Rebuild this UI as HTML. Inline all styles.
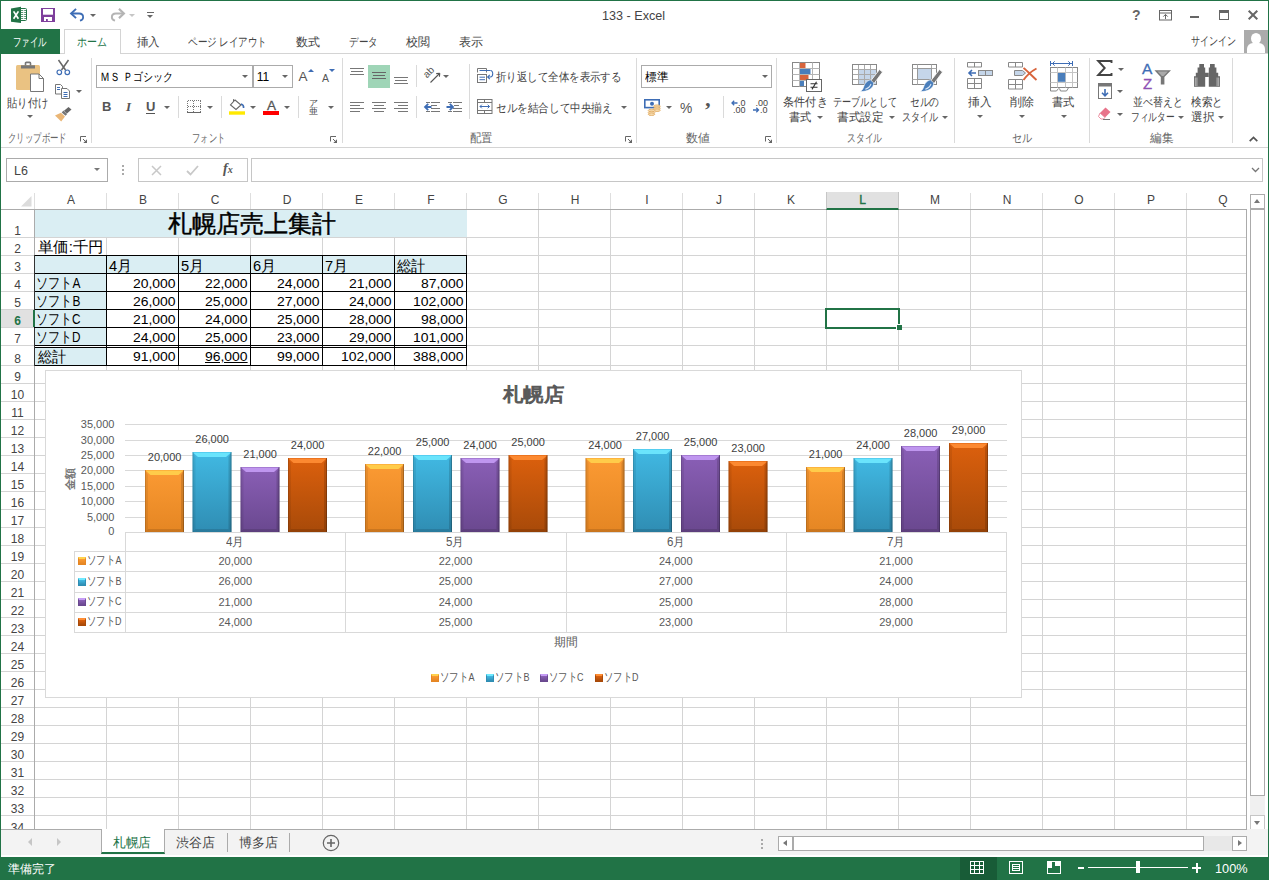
<!DOCTYPE html>
<html lang="ja"><head><meta charset="utf-8"><title>133 - Excel</title>
<style>
*{box-sizing:border-box;margin:0;padding:0}
html,body{width:1269px;height:880px;overflow:hidden;background:#fff}
body{font-family:"Liberation Sans",sans-serif;font-size:12px;color:#444;position:relative}
.a{position:absolute}
.t{position:absolute;white-space:nowrap;line-height:1}
.c{text-align:center}
.r{text-align:right}
svg{position:absolute;overflow:visible}
.ch{position:absolute;top:191px;height:18px;line-height:18px;text-align:center;font-size:12px;color:#444}
.rh{position:absolute;left:1px;width:33px;text-align:center;font-size:12px;color:#444;line-height:1}
.cell{position:absolute;font-size:15px;color:#000;line-height:1;white-space:nowrap}
.num{text-align:right;letter-spacing:.3px}
.dl{position:absolute;font-size:11px;color:#404040;width:60px;text-align:center;line-height:1;white-space:nowrap}
.gl{position:absolute;font-size:12px;color:#666;line-height:1;white-space:nowrap;text-align:center}
.rt{position:absolute;font-size:12px;color:#444;line-height:1;white-space:nowrap}
.sep{position:absolute;width:1px;background:#dadada;top:58px;height:85px}
.arr{position:absolute;width:0;height:0;border-left:3px solid transparent;border-right:3px solid transparent;border-top:3px solid #666}
</style></head><body>

<div class="a" style="left:0;top:0;width:1269px;height:880px;border:1px solid #217346;border-bottom:0"></div>
<svg style="left:11px;top:7px" width="17" height="17" viewBox="0 0 17 17">
<rect x="8.500" y="1.500" width="7" height="12" rx="1" fill="#fff" stroke="#217346" stroke-width="1"/>
<path d="M10 3.500h5.500M10 5.500h5.500M10 7.500h5.500M10 9.500h5.500M10 11.500h5.500" stroke="#217346" stroke-width="1" opacity=".75" fill="none"/><path d="M12.700 2v11" stroke="#fff" stroke-width="1" fill="none"/>
<path d="M0 1.500L10 -.2v16.200L0 14.800z" fill="#217346"/>
<path d="M2.600 4.400l4.800 7.400M7.400 4.400L2.600 11.800" stroke="#fff" stroke-width="1.700" fill="none"/>
</svg>
<svg style="left:41px;top:8px" width="14" height="14" viewBox="0 0 14 14">
<path d="M0 0h14v14H0z" fill="#7e3f9c"/><rect x="2" y="1" width="10" height="5.700" fill="#fff"/><rect x="3" y="9" width="8" height="4" fill="#fff"/><rect x="5" y="11" width="1.800" height="2" fill="#7e3f9c"/>
</svg>
<svg style="left:70px;top:7.500px" width="16" height="14.200" viewBox="0 0 18 16">
<path d="M2 6.2h8.2c3 0 4.6 1.8 4.6 4.1 0 2-1.4 3.4-3.6 3.9" fill="none" stroke="#3e6db5" stroke-width="2"/>
<path d="M6.8 1L1.2 6.2l5.6 5.2" fill="none" stroke="#3e6db5" stroke-width="2.2"/>
</svg>
<div class="arr" style="left:90px;top:14px"></div>
<svg style="left:109px;top:7.500px" width="16" height="14.200" viewBox="0 0 18 16">
<path d="M16 6.2H7.8c-3 0-4.6 1.8-4.6 4.1 0 2 1.4 3.4 3.6 3.9" fill="none" stroke="#b4b4b4" stroke-width="2.2"/>
<path d="M11.2 1l5.6 5.2-5.6 5.2" fill="none" stroke="#b4b4b4" stroke-width="2.4"/>
</svg>
<div class="arr" style="left:129px;top:14px;border-top-color:#c6c6c6"></div>
<div class="a" style="left:147px;top:12px;width:7px;height:1px;background:#666"></div>
<div class="arr" style="left:147px;top:15px"></div>
<span class="t" style="left:601.6px;top:9.0px;font-size:13px;color:#444;transform:scaleX(0.970);transform-origin:0 50%">133 - Excel</span>
<div class="t" style="left:1132px;top:8px;font-size:14px;font-weight:bold;color:#666">?</div>
<svg style="left:1159px;top:10px" width="14" height="11" viewBox="0 0 14 11">
<rect x=".5" y=".5" width="12" height="9.5" fill="none" stroke="#666"/><path d="M.5 3h12" stroke="#666"/><path d="M6.5 9V4.6M4.3 6.6l2.2-2.2 2.2 2.2" fill="none" stroke="#666"/></svg>
<div class="a" style="left:1190px;top:16px;width:9px;height:2px;background:#666"></div>
<div class="a" style="left:1219px;top:10px;width:10px;height:10px;border:1px solid #666;border-top-width:3px"></div>
<svg style="left:1248px;top:10px" width="10" height="10" viewBox="0 0 10 10"><path d="M.7.7l8.6 8.6M9.3.7L.7 9.3" stroke="#666" stroke-width="2" fill="none"/></svg>
<div class="a" style="left:0;top:29px;width:60px;height:25px;background:#217346"></div>
<span class="t" style="left:13.3px;top:36.0px;font-size:12px;color:#fff;transform:scaleX(0.702);transform-origin:0 50%">ファイル</span>
<div class="a" style="left:60px;top:53px;width:1208px;height:1px;background:#d4d4d4"></div>
<div class="a" style="left:64px;top:29px;width:57px;height:25px;background:#fff;border:1px solid #d4d4d4;border-bottom:0"></div>
<span class="t" style="left:77px;top:35.5px;font-size:12px;color:#217346;transform:scaleX(0.833);transform-origin:0 50%">ホーム</span>
<span class="t" style="left:136.5px;top:35.5px;font-size:12px;color:#444;transform:scaleX(0.958);transform-origin:0 50%">挿入</span>
<span class="t" style="left:188.3px;top:35.5px;font-size:12px;color:#444;transform:scaleX(0.795);transform-origin:0 50%">ページ レイアウト</span>
<span class="t" style="left:296.0px;top:35.5px;font-size:12px;color:#444;">数式</span>
<span class="t" style="left:349px;top:35.5px;font-size:12px;color:#444;transform:scaleX(0.792);transform-origin:0 50%">データ</span>
<span class="t" style="left:406.0px;top:35.5px;font-size:12px;color:#444;">校閲</span>
<span class="t" style="left:459.0px;top:35.5px;font-size:12px;color:#444;">表示</span>
<span class="t" style="left:1191.4px;top:34.5px;font-size:12px;color:#444;transform:scaleX(0.757);transform-origin:0 50%">サインイン</span>
<div class="a" style="left:1244px;top:30px;width:24px;height:23px;background:#ababab;overflow:hidden">
<div class="a" style="left:7px;top:3px;width:10px;height:11px;border-radius:50%;background:#fff"></div>
<div class="a" style="left:3px;top:13px;width:18px;height:16px;border-radius:6px 6px 0 0;background:#fff"></div></div>
<div class="a" style="left:1px;top:147px;width:1267px;height:1px;background:#d4d4d4"></div>
<div class="sep" style="left:91px"></div>
<div class="sep" style="left:342px"></div>
<div class="sep" style="left:636px"></div>
<div class="sep" style="left:776px"></div>
<div class="sep" style="left:954px"></div>
<div class="sep" style="left:1089px"></div>
<div class="sep" style="left:1232px"></div>
<svg style="left:16px;top:62px" width="29" height="31" viewBox="0 0 29 31">
<rect x="0" y="3" width="24" height="25" rx="1.5" fill="#eac282"/>
<path d="M5 3.300h14v3.200H5z" fill="#777"/><path d="M9.5 3.5V1.2c0-.5.4-.8.8-.8h3.400c.4 0 .8.3.8.8v2.300" fill="none" stroke="#777" stroke-width="1.6"/>
<path d="M14.500 12h8.500l4.500 4.500v13h-13z" fill="#fff" stroke="#777" stroke-width="1"/><path d="M23 12v4.500h4.500" fill="none" stroke="#777"/></svg>
<span class="t" style="left:7px;top:96.5px;font-size:12px;color:#444;transform:scaleX(0.865);transform-origin:0 50%">貼り付け</span>
<div class="arr" style="left:27px;top:115px;border-top-color:#666"></div>
<svg style="left:56px;top:60px" width="15" height="16" viewBox="0 0 15 16">
<path d="M2.500 0l7 10M12.500 0l-7 10" stroke="#666" stroke-width="1.500" fill="none"/>
<circle cx="3.300" cy="12.300" r="2.300" fill="none" stroke="#3e6db5" stroke-width="1.200"/><circle cx="11.300" cy="12.300" r="2.300" fill="none" stroke="#3e6db5" stroke-width="1.200"/></svg>
<svg style="left:55px;top:84px" width="16" height="15" viewBox="0 0 16 15">
<path d="M.5.500h5l2 2v7.500h-7z" fill="#fff" stroke="#777"/><path d="M2 3.500h3M2 5.500h3" stroke="#3e6db5"/>
<path d="M6.500 4.500h5.500l2.500 2.500v7.500h-8z" fill="#fff" stroke="#777"/><path d="M8.500 8.500h4M8.500 10.500h4M8.500 12.500h4" stroke="#3e6db5"/></svg>
<div class="arr" style="left:76px;top:90px;border-top-color:#666"></div>
<svg style="left:55px;top:107px" width="17" height="15" viewBox="0 0 17 15">
<path d="M13.500 0l3 2.500-4.500 4-3-2.700z" fill="#666"/><path d="M8.500 3.500l3.700 3.500-1.700 1.800-3.800-3.400z" fill="#777"/>
<path d="M6 5.800l4 3.800-3.800 4.800L0 8.600z" fill="#eab676"/></svg>
<span class="t" style="left:8.2px;top:131.8px;font-size:12px;color:#666;transform:scaleX(0.698);transform-origin:0 50%">クリップボード</span>
<svg style="left:80px;top:136px" width="8" height="8" viewBox="0 0 8 8"><path d="M.5 5.500V.5H6" fill="none" stroke="#666"/><path d="M3 3l3 3" fill="none" stroke="#666"/><path d="M7 3.300V7H3.300z" fill="#666"/></svg>
<div class="a" style="left:96px;top:65px;width:157px;height:23px;border:1px solid #ababab;background:#fff"></div>
<span class="t" style="left:100.4px;top:70.5px;font-size:12px;color:#000;transform:scaleX(0.837);transform-origin:0 50%">ＭＳ Ｐゴシック</span>
<div class="arr" style="left:242px;top:75px;border-top-color:#666"></div>
<div class="a" style="left:253px;top:65px;width:40px;height:23px;border:1px solid #ababab;background:#fff"></div>
<span class="t" style="left:256.7px;top:71.0px;font-size:12px;color:#000;">11</span>
<div class="arr" style="left:282px;top:75px;border-top-color:#666"></div>
<div class="t" style="left:298.500px;top:69.500px;font-size:13.500px;color:#555">A</div><div class="a" style="left:307.500px;top:69px;width:0;height:0;border-left:3px solid transparent;border-right:3px solid transparent;border-bottom:3px solid #3e6db5"></div>
<div class="t" style="left:322px;top:72.500px;font-size:10.500px;color:#555">A</div><div class="a" style="left:328.500px;top:69px;width:0;height:0;border-left:3px solid transparent;border-right:3px solid transparent;border-top:3px solid #3e6db5"></div>
<div class="t" style="left:102px;top:100px;font-size:13px;font-weight:bold;color:#555;font-family:'Liberation Sans',sans-serif">B</div>
<div class="t" style="left:126px;top:100px;font-size:13px;font-weight:bold;font-style:italic;color:#555;font-family:'Liberation Serif',serif">I</div>
<div class="t" style="left:146px;top:100px;font-size:13px;font-weight:bold;color:#555;border-bottom:1px solid #555;padding-bottom:0px">U</div>
<div class="arr" style="left:164px;top:106px;border-top-color:#666"></div>
<div class="a" style="left:178px;top:96px;width:1px;height:22px;background:#dadada"></div>
<svg style="left:187px;top:100px" width="14" height="13" viewBox="0 0 14 13"><g shape-rendering="crispEdges"><path d="M.5.500v12M13.500 .5v12M6.500 .5v12M.5 .5h13M.5 6.500h13" fill="none" stroke="#777" stroke-dasharray="1 1"/><path d="M0 12.500h14" stroke="#666" fill="none"/></g></svg>
<div class="arr" style="left:207px;top:106px;border-top-color:#666"></div>
<div class="a" style="left:221px;top:96px;width:1px;height:22px;background:#dadada"></div>
<svg style="left:229px;top:98px" width="16" height="17" viewBox="0 0 16 17">
<path d="M6 2l6 5-5 4.500L1.500 7z" fill="#fff" stroke="#666" stroke-width="1.100"/><path d="M4.500 3.500V1.200" stroke="#666"/><path d="M12 6c1.800.5 2.800 2 2.600 4" stroke="#3e6db5" stroke-width="1.600" fill="none"/>
<rect x="0" y="13.300" width="16" height="3.400" fill="#ffe900"/></svg>
<div class="arr" style="left:250px;top:106px;border-top-color:#666"></div>
<div class="t" style="left:267px;top:99px;font-size:13.500px;color:#555;-webkit-text-stroke:.3px #555">A</div><div class="a" style="left:263px;top:111px;width:16px;height:4px;background:#f00"></div>
<div class="arr" style="left:284px;top:106px;border-top-color:#666"></div>
<div class="a" style="left:298px;top:96px;width:1px;height:22px;background:#dadada"></div>
<div class="t" style="left:309px;top:98.500px;font-size:8.500px;color:#444;line-height:8.200px">ア<br>亜</div>
<div class="arr" style="left:328px;top:106px;border-top-color:#666"></div>
<span class="t" style="left:192px;top:131.8px;font-size:12px;color:#666;transform:scaleX(0.688);transform-origin:0 50%">フォント</span>
<svg style="left:330px;top:136px" width="8" height="8" viewBox="0 0 8 8"><path d="M.5 5.500V.5H6" fill="none" stroke="#666"/><path d="M3 3l3 3" fill="none" stroke="#666"/><path d="M7 3.300V7H3.300z" fill="#666"/></svg>
<div class="a" style="left:350px;top:68px;width:14px;height:1px;background:#777"></div><div class="a" style="left:351px;top:71px;width:12px;height:1px;background:#777"></div><div class="a" style="left:350px;top:74px;width:14px;height:1px;background:#777"></div>
<div class="a" style="left:368px;top:65px;width:22px;height:23px;background:#9fd5b7"></div>
<div class="a" style="left:372px;top:72px;width:14px;height:1px;background:#666"></div><div class="a" style="left:373px;top:75px;width:12px;height:1px;background:#666"></div><div class="a" style="left:372px;top:78px;width:14px;height:1px;background:#666"></div>
<div class="a" style="left:394px;top:77px;width:14px;height:1px;background:#777"></div><div class="a" style="left:395px;top:80px;width:12px;height:1px;background:#777"></div><div class="a" style="left:394px;top:83px;width:14px;height:1px;background:#777"></div>
<div class="a" style="left:416px;top:65px;width:1px;height:22px;background:#dadada"></div>
<div class="a" style="left:416px;top:96px;width:1px;height:22px;background:#dadada"></div>
<svg style="left:424px;top:67px" width="17" height="17" viewBox="0 0 17 17">
<text x="0" y="0" font-size="10" font-family="Liberation Sans" fill="#555" transform="translate(3 11.500) rotate(-45)">ab</text>
<path d="M6.500 15.500L15.500 6.500M15.800 6.200l-3.600 .4M15.800 6.200l-.4 3.600" stroke="#555" stroke-width="1.100" fill="none"/></svg>
<div class="arr" style="left:443px;top:75px;border-top-color:#666"></div>
<div class="a" style="left:469px;top:64px;width:1px;height:55px;background:#dadada"></div>
<svg style="left:477px;top:67px" width="17" height="16" viewBox="0 0 17 16">
<path d="M.5 5.500V1.500H9.500V5.500" fill="none" stroke="#777"/><rect x=".5" y="7.500" width="9" height="8" fill="none" stroke="#777"/>
<path d="M2.500 3.500H13.500M2.500 10.200H8M2.500 12.700H8" stroke="#3e6db5" fill="none"/>
<path d="M13.500 3.500c3 0 3 6.500-.2 6.500H10.800M12.800 7.800l-2.200 2.200 2.200 2.200" fill="none" stroke="#3e6db5" stroke-width="1.100"/></svg>
<span class="t" style="left:496px;top:71.0px;font-size:12px;color:#444;transform:scaleX(0.870);transform-origin:0 50%">折り返して全体を表示する</span>
<svg style="left:477px;top:99px" width="16" height="15" viewBox="0 0 16 15">
<rect x=".5" y=".5" width="14.500" height="14" fill="none" stroke="#777"/><path d="M.5 3.500h14.500M.5 11.500h14.500M7.500 .5v3M7.500 11.500v3" stroke="#777" fill="none"/>
<path d="M3 7.500h9.500M4.800 5.700L3 7.500l1.800 1.800M10.700 5.700l1.800 1.800-1.800 1.800" fill="none" stroke="#3e6db5" stroke-width="1"/></svg>
<span class="t" style="left:496px;top:102.0px;font-size:12px;color:#444;transform:scaleX(0.883);transform-origin:0 50%">セルを結合して中央揃え</span>
<div class="arr" style="left:621px;top:106px;border-top-color:#666"></div>
<div class="a" style="left:350px;top:102px;width:14px;height:1px;background:#777"></div><div class="a" style="left:350px;top:105px;width:10px;height:1px;background:#777"></div><div class="a" style="left:350px;top:108px;width:14px;height:1px;background:#777"></div><div class="a" style="left:350px;top:111px;width:10px;height:1px;background:#777"></div>
<div class="a" style="left:372.0px;top:102px;width:14px;height:1px;background:#777"></div><div class="a" style="left:374.0px;top:105px;width:10px;height:1px;background:#777"></div><div class="a" style="left:372.0px;top:108px;width:14px;height:1px;background:#777"></div><div class="a" style="left:374.0px;top:111px;width:10px;height:1px;background:#777"></div>
<div class="a" style="left:394px;top:102px;width:14px;height:1px;background:#777"></div><div class="a" style="left:398px;top:105px;width:10px;height:1px;background:#777"></div><div class="a" style="left:394px;top:108px;width:14px;height:1px;background:#777"></div><div class="a" style="left:398px;top:111px;width:10px;height:1px;background:#777"></div>
<svg style="left:424px;top:101px" width="16" height="12" viewBox="0 0 16 12" shape-rendering="crispEdges"><path d="M2 1.500h4M7 1.500h9M7 4.500h6M7 7.500h9M2 10.500h4M7 10.500h9" stroke="#777" fill="none"/></svg>
<svg style="left:424px;top:102px" width="8" height="10" viewBox="0 0 8 10"><path d="M7.500 5H1.500M4.200 1.800L1 5l3.200 3.200" fill="none" stroke="#3e6db5" stroke-width="1.800"/></svg>
<svg style="left:446px;top:101px" width="16" height="12" viewBox="0 0 16 12" shape-rendering="crispEdges"><path d="M2 1.500h4M7 1.500h9M8 4.500h5M7 7.500h9M2 10.500h4M7 10.500h9" stroke="#777" fill="none"/></svg>
<svg style="left:446px;top:102px" width="8" height="10" viewBox="0 0 8 10"><path d="M.5 5H6.500M3.800 1.800L7 5 3.800 8.200" fill="none" stroke="#3e6db5" stroke-width="1.800"/></svg>
<span class="t" style="left:470px;top:131.8px;font-size:12px;color:#666;transform:scaleX(0.946);transform-origin:0 50%">配置</span>
<svg style="left:625px;top:136px" width="8" height="8" viewBox="0 0 8 8"><path d="M.5 5.500V.5H6" fill="none" stroke="#666"/><path d="M3 3l3 3" fill="none" stroke="#666"/><path d="M7 3.300V7H3.300z" fill="#666"/></svg>
<div class="a" style="left:641px;top:65px;width:131px;height:23px;border:1px solid #ababab;background:#fff"></div>
<span class="t" style="left:644.6px;top:70.5px;font-size:12px;color:#000;transform:scaleX(0.967);transform-origin:0 50%">標準</span>
<div class="arr" style="left:762px;top:75px;border-top-color:#666"></div>
<svg style="left:644px;top:99px" width="17" height="16" viewBox="0 0 17 16">
<rect x=".8" y=".8" width="14.400" height="7.800" fill="#fff" stroke="#3e6db5" stroke-width="1.600"/><circle cx="8" cy="4.700" r="2" fill="#3e6db5"/>
<g fill="#f6dcb0" stroke="#e0a860" stroke-width=".8"><ellipse cx="13" cy="7.200" rx="3.300" ry="1.300"/><ellipse cx="13" cy="9.200" rx="3.300" ry="1.300"/><ellipse cx="13" cy="11.200" rx="3.300" ry="1.300"/><ellipse cx="7.500" cy="11.500" rx="3.300" ry="1.300"/><ellipse cx="7.500" cy="13.500" rx="3.300" ry="1.300"/><ellipse cx="7.500" cy="15.200" rx="3.300" ry="1.300"/></g></svg>
<div class="arr" style="left:666px;top:106px;border-top-color:#666"></div>
<div class="t" style="left:680px;top:99.500px;font-size:15px;color:#555;transform:scaleX(.92);transform-origin:left">%</div>
<div class="t" style="left:704px;top:99px;font-size:22px;color:#555;font-weight:bold;font-family:'Liberation Serif',serif">’</div>
<div class="a" style="left:723px;top:96px;width:1px;height:22px;background:#dadada"></div>
<svg style="left:731px;top:99px" width="16" height="15" viewBox="0 0 16 15"><path d="M6.500 4H1M3.200 1.800L1 4l2.200 2.200" fill="none" stroke="#3e6db5" stroke-width="1.300"/><text x="7" y="7" font-size="9" font-family="Liberation Sans" fill="#444">.0</text><text x="2" y="14" font-size="9" font-family="Liberation Sans" fill="#444">.00</text></svg>
<svg style="left:753px;top:99px" width="16" height="15" viewBox="0 0 16 15"><text x="2.500" y="7" font-size="9" font-family="Liberation Sans" fill="#444">.00</text><path d="M0 11h5.500M3.300 8.800l2.200 2.200-2.200 2.200" fill="none" stroke="#3e6db5" stroke-width="1.300"/><text x="7" y="14" font-size="9" font-family="Liberation Sans" fill="#444">.0</text></svg>
<span class="t" style="left:686.0px;top:131.8px;font-size:12px;color:#666;">数値</span>
<svg style="left:765px;top:136px" width="8" height="8" viewBox="0 0 8 8"><path d="M.5 5.500V.5H6" fill="none" stroke="#666"/><path d="M3 3l3 3" fill="none" stroke="#666"/><path d="M7 3.300V7H3.300z" fill="#666"/></svg>
<svg style="left:792px;top:62px" width="30" height="30" viewBox="0 0 30 30">
<rect x=".5" y=".5" width="27" height="24" fill="#fff" stroke="#888"/><path d="M.5 6.500h27M.5 12.500h27M.5 18.500h27M7.500 .5v24M20.500 .5v24" stroke="#b4b4b4" fill="none"/>
<rect x="8" y="1" width="5.500" height="5" fill="#d8643c"/><rect x="8" y="7" width="10.500" height="5" fill="#4a7ebb"/><rect x="8" y="13" width="8.500" height="5" fill="#d8643c"/><rect x="8" y="19" width="4" height="5" fill="#4a7ebb"/>
<rect x="14.500" y="17.500" width="15" height="12" fill="#fff" stroke="#666"/><path d="M18.500 21.800h7M18.500 25.200h7M24.500 19.800l-4.500 7.600" stroke="#333" stroke-width="1.100" fill="none"/></svg>
<span class="t" style="left:783.3px;top:96.4px;font-size:12px;color:#444;transform:scaleX(0.931);transform-origin:0 50%">条件付き</span>
<span class="t" style="left:789.4px;top:110.8px;font-size:12px;color:#444;transform:scaleX(0.942);transform-origin:0 50%">書式</span>
<div class="arr" style="left:817px;top:116px;border-top-color:#666"></div>
<svg style="left:852px;top:63px" width="31" height="30" viewBox="0 0 31 30">
<g transform="translate(0 1)"><rect x=".5" y=".5" width="24" height="20" fill="#fff" stroke="#888"/><rect x="6.500" y="5.500" width="18" height="15" fill="#c5d6ea"/>
<path d="M.5 5.500h24M.5 10.500h24M.5 15.500h24M6.500 .5v20M12.500 .5v20M18.500 .5v20" stroke="#aaa" fill="none"/><rect x=".5" y=".5" width="24" height="20" fill="none" stroke="#888"/></g>
<path d="M27.500 6.500l3 2.600-8.600 11.600-3.200-2.800z" fill="#777" stroke="#fff" stroke-width=".8"/><path d="M18.300 16.800l3.400 3c.3 5.200-5.800 9.200-13.700 8.700 2.600-1.200 3.200-3.200 4-5.600.9-2.700 2.700-4.900 6.300-6.100z" fill="#4a7ebb" stroke="#fff" stroke-width=".6"/><path d="M13.300 26.300c2.600-.9 4.800-2.800 5.700-5.300" stroke="#d5e4f5" stroke-width="1.100" fill="none"/></svg>
<span class="t" style="left:833px;top:96.4px;font-size:12px;color:#444;transform:scaleX(0.760);transform-origin:0 50%">テーブルとして</span>
<span class="t" style="left:837.3px;top:110.8px;font-size:12px;color:#444;transform:scaleX(0.977);transform-origin:0 50%">書式設定</span>
<div class="arr" style="left:889px;top:116px;border-top-color:#666"></div>
<svg style="left:912px;top:63px" width="31" height="30" viewBox="0 0 31 30">
<g transform="translate(0 1)"><rect x=".5" y=".5" width="24" height="20" fill="#fff" stroke="#888"/><path d="M.5 4.500h24M.5 15.500h24M5.500 .5v20M19.500 .5v20" stroke="#aaa" fill="none"/><rect x="5.500" y="4.500" width="14" height="11" fill="#c5d6ea" stroke="#999"/></g>
<path d="M27.500 6.500l3 2.600-8.600 11.600-3.200-2.800z" fill="#777" stroke="#fff" stroke-width=".8"/><path d="M18.300 16.800l3.400 3c.3 5.200-5.800 9.200-13.700 8.700 2.600-1.200 3.200-3.200 4-5.600.9-2.700 2.700-4.900 6.300-6.100z" fill="#4a7ebb" stroke="#fff" stroke-width=".6"/><path d="M13.300 26.300c2.600-.9 4.800-2.800 5.700-5.300" stroke="#d5e4f5" stroke-width="1.100" fill="none"/></svg>
<span class="t" style="left:910.4px;top:96.4px;font-size:12px;color:#444;transform:scaleX(0.811);transform-origin:0 50%">セルの</span>
<span class="t" style="left:901.8px;top:110.8px;font-size:12px;color:#444;transform:scaleX(0.754);transform-origin:0 50%">スタイル</span>
<div class="arr" style="left:942px;top:116px;border-top-color:#666"></div>
<span class="t" style="left:847.3px;top:131.8px;font-size:12px;color:#666;transform:scaleX(0.735);transform-origin:0 50%">スタイル</span>
<svg style="left:967px;top:62px" width="27" height="27" viewBox="0 0 27 27">
<path d="M.5.500h14v4.500H.5zM7.500 .5v4.500" fill="#fff" stroke="#888"/><path d="M.5 16.500h14v10H.5zM.5 21.500h14M7.500 16.500v10" fill="#fff" stroke="#888"/>
<rect x="11.500" y="8.500" width="14" height="5" fill="#c5d6ea" stroke="#888"/><path d="M18.500 8.500v5" stroke="#888"/><path d="M9 11H2M5 8l-3 3 3 3" fill="none" stroke="#3e6db5" stroke-width="1.600"/></svg>
<span class="t" style="left:967.9px;top:96.0px;font-size:12px;color:#444;transform:scaleX(0.979);transform-origin:0 50%">挿入</span>
<div class="arr" style="left:977px;top:115px;border-top-color:#666"></div>
<svg style="left:1008px;top:62px" width="30" height="27" viewBox="0 0 30 27">
<path d="M.5.500h14v4.500H.5zM7.500 .5v4.500" fill="#fff" stroke="#888"/><path d="M.5 17.500h14v9.500H.5zM.5 22.500h14M7.500 17.500v9.500" fill="#fff" stroke="#888"/>
<path d="M6.500 8.500h8l3 2.500-3 2.500h-8z" fill="#c5d6ea" stroke="#888"/><path d="M15.500 6c4 3 8 7.500 13 12M28.500 6.500C23 9.500 19 13 15.500 18" fill="none" stroke="#d8643c" stroke-width="1.900"/></svg>
<span class="t" style="left:1010.3px;top:96.0px;font-size:12px;color:#444;">削除</span>
<div class="arr" style="left:1019px;top:115px;border-top-color:#666"></div>
<svg style="left:1050px;top:60px" width="29" height="32" viewBox="0 0 29 32">
<path d="M.5 3.500H22.500M.5 1v5M22.500 1v5M4.700 1.300L2.500 3.500l2.200 2.200M18.300 1.300l2.200 2.200-2.200 2.200" fill="none" stroke="#3e6db5"/>
<rect x=".5" y="7.500" width="27" height="20" fill="#fff" stroke="#888"/><path d="M.5 12.500h27M.5 22.500h27M7.500 7.500v20M15.500 7.500v20M22.500 7.500v20" stroke="#c4c4c4" fill="none"/>
<rect x="8" y="13" width="7.200" height="8.800" fill="#4a7ebb"/>
<path d="M.5 27.500V31H6.500L8.500 28.500M9.500 28.500L10.500 31H16.500L18.500 27.800" fill="none" stroke="#888"/></svg>
<span class="t" style="left:1052.4px;top:96.0px;font-size:12px;color:#444;transform:scaleX(0.942);transform-origin:0 50%">書式</span>
<div class="arr" style="left:1061px;top:115px;border-top-color:#666"></div>
<span class="t" style="left:1012px;top:131.8px;font-size:12px;color:#666;transform:scaleX(0.842);transform-origin:0 50%">セル</span>
<svg style="left:1097px;top:60px" width="16" height="16" viewBox="0 0 16 16"><path d="M14.500 3V1H1.200l6.500 7-6.500 7h13.300v-2" fill="none" stroke="#444" stroke-width="1.900"/></svg>
<div class="arr" style="left:1118px;top:68px;border-top-color:#666"></div>
<svg style="left:1098px;top:83px" width="14" height="16" viewBox="0 0 14 16"><rect x=".5" y=".5" width="13" height="15" fill="#fff" stroke="#777"/><rect x=".5" y=".5" width="13" height="3" fill="#777"/><path d="M7 6v6.500M4 9.800l3 3 3-3" fill="none" stroke="#3e6db5" stroke-width="1.600"/></svg>
<div class="arr" style="left:1117px;top:90px;border-top-color:#666"></div>
<svg style="left:1098px;top:107px" width="13" height="13" viewBox="0 0 13 13"><path d="M7.500 .5l5 4.500-5.500 5.500-5-4.500z" fill="#e8738a"/><path d="M2 6l5 4.500-1.500 1.500H3L.5 9.500z" fill="#fff" stroke="#e8738a" stroke-width=".8"/><path d="M5 12.500h7" stroke="#777"/></svg>
<div class="arr" style="left:1117px;top:113px;border-top-color:#666"></div>
<svg style="left:1142px;top:63px" width="30" height="27" viewBox="0 0 30 27">
<text x="0" y="11.300" font-size="15.500" font-family="Liberation Sans" fill="#3e6db5" stroke="#3e6db5" stroke-width=".3">A</text><text x="1" y="25.600" font-size="15" font-family="Liberation Sans" fill="#8e4fb3" stroke="#8e4fb3" stroke-width=".3">Z</text>
<path d="M12.400 7.200h16.600l-6.600 6.800v7.500h-3.600v-7.500z" fill="#777"/><path d="M15.500 8.600h10.400l-4.400 4.400h-1.600z" fill="#aaa"/></svg>
<span class="t" style="left:1132.6px;top:96.0px;font-size:12px;color:#444;transform:scaleX(0.827);transform-origin:0 50%">並べ替えと</span>
<span class="t" style="left:1130.5px;top:110.5px;font-size:12px;color:#444;transform:scaleX(0.725);transform-origin:0 50%">フィルター</span>
<div class="arr" style="left:1178px;top:116px;border-top-color:#666"></div>
<svg style="left:1193px;top:64px" width="28" height="24" viewBox="0 0 28 24">
<path d="M6.300 0H11V3.400H12.200V22.700H1V12.300H2.800V8.700H4.600V3.400H6.300zM21.700 0H17V3.400H15.800V22.700H27V12.300H25.200V8.700H23.400V3.400H21.700zM12 8.700h4v4.300h-4z" fill="#666"/>
<path d="M2.300 13.500v8.500M3.900 13.500v8.500M25.700 13.500v8.500M24.100 13.500v8.500" stroke="#ddd" stroke-width=".7"/></svg>
<span class="t" style="left:1191px;top:96.0px;font-size:12px;color:#444;transform:scaleX(0.878);transform-origin:0 50%">検索と</span>
<span class="t" style="left:1190.5px;top:110.5px;font-size:12px;color:#444;transform:scaleX(0.971);transform-origin:0 50%">選択</span>
<div class="arr" style="left:1218px;top:116px;border-top-color:#666"></div>
<span class="t" style="left:1149.5px;top:131.8px;font-size:12px;color:#666;transform:scaleX(0.967);transform-origin:0 50%">編集</span>
<svg style="left:1249px;top:136px" width="9" height="6" viewBox="0 0 9 6"><path d="M.7 5.200L4.500 1.400l3.800 3.800" fill="none" stroke="#555" stroke-width="1.700"/></svg>
<div class="a" style="left:6px;top:158px;width:102px;height:24px;border:1px solid #ababab;background:#fff"></div>
<span class="t" style="left:13.5px;top:164.5px;font-size:12px;color:#444;transform:scaleX(1.040);transform-origin:0 50%">L6</span>
<div class="arr" style="left:94px;top:168px;border-top-color:#777"></div>
<div class="a" style="left:122px;top:165px;width:2px;height:2px;background:#aaa"></div><div class="a" style="left:122px;top:169px;width:2px;height:2px;background:#aaa"></div><div class="a" style="left:122px;top:173px;width:2px;height:2px;background:#aaa"></div>
<div class="a" style="left:138px;top:158px;width:110px;height:24px;border:1px solid #c6c6c6;background:#fff"></div>
<svg style="left:151px;top:165px" width="11" height="11" viewBox="0 0 11 11"><path d="M1 1l9 9M10 1l-9 9" stroke="#c8c8c8" stroke-width="1.500" fill="none"/></svg>
<svg style="left:186px;top:165px" width="13" height="11" viewBox="0 0 13 11"><path d="M1 6l3.500 3.500L12 1" stroke="#c8c8c8" stroke-width="1.800" fill="none"/></svg>
<div class="t" style="left:223px;top:162px;font-size:14px;font-style:italic;font-weight:bold;font-family:'Liberation Serif',serif;color:#555">f<span style="font-size:10px">x</span></div>
<div class="a" style="left:251px;top:158px;width:1012px;height:24px;border:1px solid #c6c6c6;background:#fff"></div>
<svg style="left:1251px;top:167px" width="9" height="6" viewBox="0 0 9 6"><path d="M1 1l3.500 3.500L8 1" fill="none" stroke="#777" stroke-width="1.300"/></svg>
<svg style="left:0;top:0" width="1269" height="880" shape-rendering="crispEdges"><path d="M1 237.5H1247M1 255.5H1247M1 273.5H1247M1 291.5H1247M1 309.5H1247M1 327.5H1247M1 345.5H1247M1 365.5H1247M1 383.5H1247M1 401.5H1247M1 419.5H1247M1 437.5H1247M1 455.5H1247M1 473.5H1247M1 491.5H1247M1 509.5H1247M1 527.5H1247M1 545.5H1247M1 563.5H1247M1 581.5H1247M1 599.5H1247M1 617.5H1247M1 635.5H1247M1 653.5H1247M1 671.5H1247M1 689.5H1247M1 707.5H1247M1 725.5H1247M1 743.5H1247M1 761.5H1247M1 779.5H1247M1 797.5H1247M1 815.5H1247M106.5 210V829M178.5 210V829M250.5 210V829M322.5 210V829M394.5 210V829M466.5 210V829M538.5 210V829M610.5 210V829M682.5 210V829M754.5 210V829M826.5 210V829M898.5 210V829M970.5 210V829M1042.5 210V829M1114.5 210V829M1186.5 210V829M1246.5 210V829" stroke="#d4d4d4" fill="none"/><path d="M34.5 193V209M106.5 193V209M178.5 193V209M250.5 193V209M322.5 193V209M394.5 193V209M466.5 193V209M538.5 193V209M610.5 193V209M682.5 193V209M754.5 193V209M826.5 193V209M898.5 193V209M970.5 193V209M1042.5 193V209M1114.5 193V209M1186.5 193V209" stroke="#dedede" fill="none"/><path d="M1 209.5H1247M34.500 210V829" stroke="#ababab" fill="none"/></svg>
<svg style="left:21px;top:196px" width="11" height="11" viewBox="0 0 11 11"><path d="M10.500 0v10.500H0z" fill="#dcdcdc"/></svg>
<div class="ch" style="left:35px;width:72px">A</div>
<div class="ch" style="left:107px;width:72px">B</div>
<div class="ch" style="left:179px;width:72px">C</div>
<div class="ch" style="left:251px;width:72px">D</div>
<div class="ch" style="left:323px;width:72px">E</div>
<div class="ch" style="left:395px;width:72px">F</div>
<div class="ch" style="left:467px;width:72px">G</div>
<div class="ch" style="left:539px;width:72px">H</div>
<div class="ch" style="left:611px;width:72px">I</div>
<div class="ch" style="left:683px;width:72px">J</div>
<div class="ch" style="left:755px;width:72px">K</div>
<div class="a" style="left:826px;top:192px;width:73px;height:18px;background:#e1e1e1;border-bottom:2px solid #217346;border-left:1px solid #c6c6c6;border-right:1px solid #c6c6c6"></div>
<div class="ch" style="left:827px;width:71px;color:#217346;-webkit-text-stroke:.4px #217346">L</div>
<div class="ch" style="left:899px;width:72px">M</div>
<div class="ch" style="left:971px;width:72px">N</div>
<div class="ch" style="left:1043px;width:72px">O</div>
<div class="ch" style="left:1115px;width:72px">P</div>
<div class="ch" style="left:1187px;width:72px">Q</div>
<div class="rh" style="top:224.5px">1</div>
<div class="rh" style="top:242.5px">2</div>
<div class="rh" style="top:260.5px">3</div>
<div class="rh" style="top:278.5px">4</div>
<div class="rh" style="top:296.5px">5</div>
<div class="a" style="left:1px;top:310px;width:34px;height:17px;background:#e1e1e1;border-right:2px solid #217346"></div>
<div class="rh" style="top:314.5px;color:#217346;font-weight:bold">6</div>
<div class="rh" style="top:332.5px">7</div>
<div class="rh" style="top:352.5px">8</div>
<div class="rh" style="top:370.5px">9</div>
<div class="rh" style="top:388.5px">10</div>
<div class="rh" style="top:406.5px">11</div>
<div class="rh" style="top:424.5px">12</div>
<div class="rh" style="top:442.5px">13</div>
<div class="rh" style="top:460.5px">14</div>
<div class="rh" style="top:478.5px">15</div>
<div class="rh" style="top:496.5px">16</div>
<div class="rh" style="top:514.5px">17</div>
<div class="rh" style="top:532.5px">18</div>
<div class="rh" style="top:550.5px">19</div>
<div class="rh" style="top:568.5px">20</div>
<div class="rh" style="top:586.5px">21</div>
<div class="rh" style="top:604.5px">22</div>
<div class="rh" style="top:622.5px">23</div>
<div class="rh" style="top:640.5px">24</div>
<div class="rh" style="top:658.5px">25</div>
<div class="rh" style="top:676.5px">26</div>
<div class="rh" style="top:694.5px">27</div>
<div class="rh" style="top:712.5px">28</div>
<div class="rh" style="top:730.5px">29</div>
<div class="rh" style="top:748.5px">30</div>
<div class="rh" style="top:766.5px">31</div>
<div class="rh" style="top:784.5px">32</div>
<div class="rh" style="top:802.5px">33</div>
<div class="rh" style="top:821.5px">34</div>
<div class="a" style="left:35px;top:210px;width:432px;height:27px;background:#daeef3"></div>
<div class="a" style="left:35px;top:256px;width:431px;height:17px;background:#daeef3"></div>
<div class="a" style="left:35px;top:274px;width:71px;height:91px;background:#daeef3"></div>
<svg style="left:0;top:0" width="1269" height="880" shape-rendering="crispEdges"><path d="M34 255.5H467M34 273.5H467M34 291.5H467M34 309.5H467M34 327.5H467M34 345.5H467M34 347.5H467M34 365.5H467M106.5 255V366M178.5 255V366M250.5 255V366M322.5 255V366M394.5 255V366M466.5 255V366" stroke="#000" fill="none"/><path d="M34.500 255V310M34.500 328V366" stroke="#333" fill="none"/></svg>
<div class="a" style="left:35px;top:346px;width:431px;height:1px;background:#fff"></div>
<svg style="left:0;top:0" width="1269" height="880" shape-rendering="crispEdges"><path d="M106.5 345V348M178.5 345V348M250.5 345V348M322.5 345V348M394.5 345V348M466.5 345V348" stroke="#000" fill="none"/><path d="M34.500 345V348" stroke="#333" fill="none"/></svg>
<div class="a" style="left:35px;top:348px;width:71px;height:17px;background:#daeef3"></div>
<span class="t" style="left:168.3px;top:212.1px;font-size:24px;color:#000;-webkit-text-stroke:.45px #000;">札幌店売上集計</span>
<span class="t" style="left:37.9px;top:240.465px;font-size:14.67px;color:#000;transform:scaleX(1.025);transform-origin:0 50%">単価:千円</span>
<span class="t" style="left:109.0px;top:259.46500000000003px;font-size:14.67px;color:#000;">4月</span>
<span class="t" style="left:181.0px;top:259.46500000000003px;font-size:14.67px;color:#000;">5月</span>
<span class="t" style="left:253.0px;top:259.46500000000003px;font-size:14.67px;color:#000;">6月</span>
<span class="t" style="left:325.0px;top:259.46500000000003px;font-size:14.67px;color:#000;">7月</span>
<span class="t" style="left:397px;top:259.46500000000003px;font-size:14.67px;color:#000;transform:scaleX(0.950);transform-origin:0 50%">総計</span>
<span class="t" style="left:36px;top:276.46500000000003px;font-size:14.67px;color:#000;transform:scaleX(0.812);transform-origin:0 50%">ソフトA</span>
<span class="t" style="left:133.0px;top:277.05px;font-size:13.5px;color:#000;transform:scaleX(1.032);transform-origin:0 50%">20,000</span>
<span class="t" style="left:205.0px;top:277.05px;font-size:13.5px;color:#000;transform:scaleX(1.032);transform-origin:0 50%">22,000</span>
<span class="t" style="left:277.0px;top:277.05px;font-size:13.5px;color:#000;transform:scaleX(1.032);transform-origin:0 50%">24,000</span>
<span class="t" style="left:349.0px;top:277.05px;font-size:13.5px;color:#000;transform:scaleX(1.032);transform-origin:0 50%">21,000</span>
<span class="t" style="left:421.0px;top:277.05px;font-size:13.5px;color:#000;transform:scaleX(1.032);transform-origin:0 50%">87,000</span>
<span class="t" style="left:36px;top:294.46500000000003px;font-size:14.67px;color:#000;transform:scaleX(0.812);transform-origin:0 50%">ソフトB</span>
<span class="t" style="left:133.0px;top:295.05px;font-size:13.5px;color:#000;transform:scaleX(1.032);transform-origin:0 50%">26,000</span>
<span class="t" style="left:205.0px;top:295.05px;font-size:13.5px;color:#000;transform:scaleX(1.032);transform-origin:0 50%">25,000</span>
<span class="t" style="left:277.0px;top:295.05px;font-size:13.5px;color:#000;transform:scaleX(1.032);transform-origin:0 50%">27,000</span>
<span class="t" style="left:349.0px;top:295.05px;font-size:13.5px;color:#000;transform:scaleX(1.032);transform-origin:0 50%">24,000</span>
<span class="t" style="left:413.20000000000005px;top:295.05px;font-size:13.5px;color:#000;transform:scaleX(1.033);transform-origin:0 50%">102,000</span>
<span class="t" style="left:36px;top:312.46500000000003px;font-size:14.67px;color:#000;transform:scaleX(0.800);transform-origin:0 50%">ソフトC</span>
<span class="t" style="left:133.0px;top:313.05px;font-size:13.5px;color:#000;transform:scaleX(1.032);transform-origin:0 50%">21,000</span>
<span class="t" style="left:205.0px;top:313.05px;font-size:13.5px;color:#000;transform:scaleX(1.032);transform-origin:0 50%">24,000</span>
<span class="t" style="left:277.0px;top:313.05px;font-size:13.5px;color:#000;transform:scaleX(1.032);transform-origin:0 50%">25,000</span>
<span class="t" style="left:349.0px;top:313.05px;font-size:13.5px;color:#000;transform:scaleX(1.032);transform-origin:0 50%">28,000</span>
<span class="t" style="left:421.0px;top:313.05px;font-size:13.5px;color:#000;transform:scaleX(1.032);transform-origin:0 50%">98,000</span>
<span class="t" style="left:36px;top:330.46500000000003px;font-size:14.67px;color:#000;transform:scaleX(0.800);transform-origin:0 50%">ソフトD</span>
<span class="t" style="left:133.0px;top:331.05px;font-size:13.5px;color:#000;transform:scaleX(1.032);transform-origin:0 50%">24,000</span>
<span class="t" style="left:205.0px;top:331.05px;font-size:13.5px;color:#000;transform:scaleX(1.032);transform-origin:0 50%">25,000</span>
<span class="t" style="left:277.0px;top:331.05px;font-size:13.5px;color:#000;transform:scaleX(1.032);transform-origin:0 50%">23,000</span>
<span class="t" style="left:349.0px;top:331.05px;font-size:13.5px;color:#000;transform:scaleX(1.032);transform-origin:0 50%">29,000</span>
<span class="t" style="left:413.20000000000005px;top:331.05px;font-size:13.5px;color:#000;transform:scaleX(1.033);transform-origin:0 50%">101,000</span>
<span class="t" style="left:37.8px;top:349.665px;font-size:14.67px;color:#000;transform:scaleX(0.947);transform-origin:0 50%">総計</span>
<span class="t" style="left:133.0px;top:349.85px;font-size:13.5px;color:#000;transform:scaleX(1.032);transform-origin:0 50%">91,000</span>
<span class="t" style="left:205.0px;top:349.85px;font-size:13.5px;color:#000;text-decoration:underline;text-underline-offset:1px;transform:scaleX(1.032);transform-origin:0 50%">96,000</span>
<span class="t" style="left:277.0px;top:349.85px;font-size:13.5px;color:#000;transform:scaleX(1.032);transform-origin:0 50%">99,000</span>
<span class="t" style="left:341.20000000000005px;top:349.85px;font-size:13.5px;color:#000;transform:scaleX(1.033);transform-origin:0 50%">102,000</span>
<span class="t" style="left:413.20000000000005px;top:349.85px;font-size:13.5px;color:#000;transform:scaleX(1.033);transform-origin:0 50%">388,000</span>
<div class="a" style="left:825px;top:308px;width:75px;height:21px;border:2px solid #217346"></div>
<div class="a" style="left:896px;top:324px;width:6px;height:6px;background:#217346;border:1px solid #fff;border-right:0;border-bottom:0"></div>
<div class="a" style="left:45px;top:370px;width:977px;height:328px;background:#fff;border:1px solid #d9d9d9"></div>
<span class="t" style="left:503px;top:385.2px;font-size:19px;color:#595959;-webkit-text-stroke:1px #595959;transform:scaleX(1.070);transform-origin:0 50%">札幌店</span>
<svg style="left:0;top:0" width="1269" height="880"><defs><linearGradient id="go" x1="0" y1="0" x2="0" y2="1"><stop offset="0" stop-color="#fb9a33"/><stop offset="1" stop-color="#e58623"/></linearGradient><linearGradient id="gb" x1="0" y1="0" x2="0" y2="1"><stop offset="0" stop-color="#41b9e3"/><stop offset="1" stop-color="#2f8db3"/></linearGradient><linearGradient id="gp" x1="0" y1="0" x2="0" y2="1"><stop offset="0" stop-color="#8a5fb6"/><stop offset="1" stop-color="#6a488f"/></linearGradient><linearGradient id="gd" x1="0" y1="0" x2="0" y2="1"><stop offset="0" stop-color="#dc600d"/><stop offset="1" stop-color="#a84a09"/></linearGradient></defs><g shape-rendering="crispEdges"><path d="M125 517.5H1007M125 501.5H1007M125 486.5H1007M125 470.5H1007M125 455.5H1007M125 440.5H1007M125 424.5H1007" stroke="#d9d9d9" fill="none"/><path d="M125 532.5H1007M74 551.5H1007M74 571.5H1007M74 592.5H1007M74 612.5H1007M74 632.5H1007M74.500 551V633M125.5 532V633M345.5 532V633M566.5 532V633M786.5 532V633M1006.5 532V633" stroke="#d9d9d9" fill="none"/></g><g transform="translate(145.0 470)"><rect width="39" height="62" fill="url(#go)"/><path d="M0 0L3 5V59L0 62z" fill="#000" opacity=".07"/><path d="M39 0L36 5V59L39 62z" fill="#000" opacity=".14"/><path d="M0 62L3 59H36L39 62z" fill="#000" opacity=".12"/><path d="M.5 .5H38.5L33.5 5H5.5z" fill="#ffd24d" opacity=".9"/><path d="M38.5 0V62" stroke="#000" opacity=".22" fill="none"/><path d="M.5 0V62" stroke="#000" opacity=".12" fill="none"/></g><g transform="translate(192.5 452)"><rect width="39" height="80" fill="url(#gb)"/><path d="M0 0L3 5V77L0 80z" fill="#000" opacity=".07"/><path d="M39 0L36 5V77L39 80z" fill="#000" opacity=".14"/><path d="M0 80L3 77H36L39 80z" fill="#000" opacity=".12"/><path d="M.5 .5H38.5L33.5 5H5.5z" fill="#6fe9ff" opacity=".9"/><path d="M38.5 0V80" stroke="#000" opacity=".22" fill="none"/><path d="M.5 0V80" stroke="#000" opacity=".12" fill="none"/></g><g transform="translate(240.5 467)"><rect width="39" height="65" fill="url(#gp)"/><path d="M0 0L3 5V62L0 65z" fill="#000" opacity=".07"/><path d="M39 0L36 5V62L39 65z" fill="#000" opacity=".14"/><path d="M0 65L3 62H36L39 65z" fill="#000" opacity=".12"/><path d="M.5 .5H38.5L33.5 5H5.5z" fill="#c59cf5" opacity=".9"/><path d="M38.5 0V65" stroke="#000" opacity=".22" fill="none"/><path d="M.5 0V65" stroke="#000" opacity=".12" fill="none"/></g><g transform="translate(288.0 458)"><rect width="39" height="74" fill="url(#gd)"/><path d="M0 0L3 5V71L0 74z" fill="#000" opacity=".07"/><path d="M39 0L36 5V71L39 74z" fill="#000" opacity=".14"/><path d="M0 74L3 71H36L39 74z" fill="#000" opacity=".12"/><path d="M.5 .5H38.5L33.5 5H5.5z" fill="#ff8e35" opacity=".9"/><path d="M38.5 0V74" stroke="#000" opacity=".22" fill="none"/><path d="M.5 0V74" stroke="#000" opacity=".12" fill="none"/></g><g transform="translate(365.0 464)"><rect width="39" height="68" fill="url(#go)"/><path d="M0 0L3 5V65L0 68z" fill="#000" opacity=".07"/><path d="M39 0L36 5V65L39 68z" fill="#000" opacity=".14"/><path d="M0 68L3 65H36L39 68z" fill="#000" opacity=".12"/><path d="M.5 .5H38.5L33.5 5H5.5z" fill="#ffd24d" opacity=".9"/><path d="M38.5 0V68" stroke="#000" opacity=".22" fill="none"/><path d="M.5 0V68" stroke="#000" opacity=".12" fill="none"/></g><g transform="translate(413.0 455)"><rect width="39" height="77" fill="url(#gb)"/><path d="M0 0L3 5V74L0 77z" fill="#000" opacity=".07"/><path d="M39 0L36 5V74L39 77z" fill="#000" opacity=".14"/><path d="M0 77L3 74H36L39 77z" fill="#000" opacity=".12"/><path d="M.5 .5H38.5L33.5 5H5.5z" fill="#6fe9ff" opacity=".9"/><path d="M38.5 0V77" stroke="#000" opacity=".22" fill="none"/><path d="M.5 0V77" stroke="#000" opacity=".12" fill="none"/></g><g transform="translate(460.5 458)"><rect width="39" height="74" fill="url(#gp)"/><path d="M0 0L3 5V71L0 74z" fill="#000" opacity=".07"/><path d="M39 0L36 5V71L39 74z" fill="#000" opacity=".14"/><path d="M0 74L3 71H36L39 74z" fill="#000" opacity=".12"/><path d="M.5 .5H38.5L33.5 5H5.5z" fill="#c59cf5" opacity=".9"/><path d="M38.5 0V74" stroke="#000" opacity=".22" fill="none"/><path d="M.5 0V74" stroke="#000" opacity=".12" fill="none"/></g><g transform="translate(508.5 455)"><rect width="39" height="77" fill="url(#gd)"/><path d="M0 0L3 5V74L0 77z" fill="#000" opacity=".07"/><path d="M39 0L36 5V74L39 77z" fill="#000" opacity=".14"/><path d="M0 77L3 74H36L39 77z" fill="#000" opacity=".12"/><path d="M.5 .5H38.5L33.5 5H5.5z" fill="#ff8e35" opacity=".9"/><path d="M38.5 0V77" stroke="#000" opacity=".22" fill="none"/><path d="M.5 0V77" stroke="#000" opacity=".12" fill="none"/></g><g transform="translate(585.5 458)"><rect width="39" height="74" fill="url(#go)"/><path d="M0 0L3 5V71L0 74z" fill="#000" opacity=".07"/><path d="M39 0L36 5V71L39 74z" fill="#000" opacity=".14"/><path d="M0 74L3 71H36L39 74z" fill="#000" opacity=".12"/><path d="M.5 .5H38.5L33.5 5H5.5z" fill="#ffd24d" opacity=".9"/><path d="M38.5 0V74" stroke="#000" opacity=".22" fill="none"/><path d="M.5 0V74" stroke="#000" opacity=".12" fill="none"/></g><g transform="translate(633.0 449)"><rect width="39" height="83" fill="url(#gb)"/><path d="M0 0L3 5V80L0 83z" fill="#000" opacity=".07"/><path d="M39 0L36 5V80L39 83z" fill="#000" opacity=".14"/><path d="M0 83L3 80H36L39 83z" fill="#000" opacity=".12"/><path d="M.5 .5H38.5L33.5 5H5.5z" fill="#6fe9ff" opacity=".9"/><path d="M38.5 0V83" stroke="#000" opacity=".22" fill="none"/><path d="M.5 0V83" stroke="#000" opacity=".12" fill="none"/></g><g transform="translate(681.0 455)"><rect width="39" height="77" fill="url(#gp)"/><path d="M0 0L3 5V74L0 77z" fill="#000" opacity=".07"/><path d="M39 0L36 5V74L39 77z" fill="#000" opacity=".14"/><path d="M0 77L3 74H36L39 77z" fill="#000" opacity=".12"/><path d="M.5 .5H38.5L33.5 5H5.5z" fill="#c59cf5" opacity=".9"/><path d="M38.5 0V77" stroke="#000" opacity=".22" fill="none"/><path d="M.5 0V77" stroke="#000" opacity=".12" fill="none"/></g><g transform="translate(728.5 461)"><rect width="39" height="71" fill="url(#gd)"/><path d="M0 0L3 5V68L0 71z" fill="#000" opacity=".07"/><path d="M39 0L36 5V68L39 71z" fill="#000" opacity=".14"/><path d="M0 71L3 68H36L39 71z" fill="#000" opacity=".12"/><path d="M.5 .5H38.5L33.5 5H5.5z" fill="#ff8e35" opacity=".9"/><path d="M38.5 0V71" stroke="#000" opacity=".22" fill="none"/><path d="M.5 0V71" stroke="#000" opacity=".12" fill="none"/></g><g transform="translate(806.0 467)"><rect width="39" height="65" fill="url(#go)"/><path d="M0 0L3 5V62L0 65z" fill="#000" opacity=".07"/><path d="M39 0L36 5V62L39 65z" fill="#000" opacity=".14"/><path d="M0 65L3 62H36L39 65z" fill="#000" opacity=".12"/><path d="M.5 .5H38.5L33.5 5H5.5z" fill="#ffd24d" opacity=".9"/><path d="M38.5 0V65" stroke="#000" opacity=".22" fill="none"/><path d="M.5 0V65" stroke="#000" opacity=".12" fill="none"/></g><g transform="translate(853.5 458)"><rect width="39" height="74" fill="url(#gb)"/><path d="M0 0L3 5V71L0 74z" fill="#000" opacity=".07"/><path d="M39 0L36 5V71L39 74z" fill="#000" opacity=".14"/><path d="M0 74L3 71H36L39 74z" fill="#000" opacity=".12"/><path d="M.5 .5H38.5L33.5 5H5.5z" fill="#6fe9ff" opacity=".9"/><path d="M38.5 0V74" stroke="#000" opacity=".22" fill="none"/><path d="M.5 0V74" stroke="#000" opacity=".12" fill="none"/></g><g transform="translate(901.0 446)"><rect width="39" height="86" fill="url(#gp)"/><path d="M0 0L3 5V83L0 86z" fill="#000" opacity=".07"/><path d="M39 0L36 5V83L39 86z" fill="#000" opacity=".14"/><path d="M0 86L3 83H36L39 86z" fill="#000" opacity=".12"/><path d="M.5 .5H38.5L33.5 5H5.5z" fill="#c59cf5" opacity=".9"/><path d="M38.5 0V86" stroke="#000" opacity=".22" fill="none"/><path d="M.5 0V86" stroke="#000" opacity=".12" fill="none"/></g><g transform="translate(949.0 443)"><rect width="39" height="89" fill="url(#gd)"/><path d="M0 0L3 5V86L0 89z" fill="#000" opacity=".07"/><path d="M39 0L36 5V86L39 89z" fill="#000" opacity=".14"/><path d="M0 89L3 86H36L39 89z" fill="#000" opacity=".12"/><path d="M.5 .5H38.5L33.5 5H5.5z" fill="#ff8e35" opacity=".9"/><path d="M38.5 0V89" stroke="#000" opacity=".22" fill="none"/><path d="M.5 0V89" stroke="#000" opacity=".12" fill="none"/></g></svg>
<span class="t" style="left:147.8px;top:451.5px;font-size:11px;color:#404040;">20,000</span>
<span class="t" style="left:195.3px;top:433.5px;font-size:11px;color:#404040;">26,000</span>
<span class="t" style="left:243.3px;top:448.5px;font-size:11px;color:#404040;">21,000</span>
<span class="t" style="left:290.8px;top:439.5px;font-size:11px;color:#404040;">24,000</span>
<span class="t" style="left:367.8px;top:445.5px;font-size:11px;color:#404040;">22,000</span>
<span class="t" style="left:415.8px;top:436.5px;font-size:11px;color:#404040;">25,000</span>
<span class="t" style="left:463.3px;top:439.5px;font-size:11px;color:#404040;">24,000</span>
<span class="t" style="left:511.3px;top:436.5px;font-size:11px;color:#404040;">25,000</span>
<span class="t" style="left:588.3px;top:439.5px;font-size:11px;color:#404040;">24,000</span>
<span class="t" style="left:635.8px;top:430.5px;font-size:11px;color:#404040;">27,000</span>
<span class="t" style="left:683.8px;top:436.5px;font-size:11px;color:#404040;">25,000</span>
<span class="t" style="left:731.3px;top:442.5px;font-size:11px;color:#404040;">23,000</span>
<span class="t" style="left:808.8px;top:448.5px;font-size:11px;color:#404040;">21,000</span>
<span class="t" style="left:856.3px;top:439.5px;font-size:11px;color:#404040;">24,000</span>
<span class="t" style="left:903.8px;top:427.5px;font-size:11px;color:#404040;">28,000</span>
<span class="t" style="left:951.8px;top:424.5px;font-size:11px;color:#404040;">29,000</span>
<span class="t" style="left:108.2px;top:525.5px;font-size:11px;color:#595959;">0</span>
<span class="t" style="left:86.9px;top:511.5px;font-size:11px;color:#595959;">5,000</span>
<span class="t" style="left:80.8px;top:495.5px;font-size:11px;color:#595959;">10,000</span>
<span class="t" style="left:80.8px;top:480.5px;font-size:11px;color:#595959;">15,000</span>
<span class="t" style="left:80.8px;top:464.5px;font-size:11px;color:#595959;">20,000</span>
<span class="t" style="left:80.8px;top:449.5px;font-size:11px;color:#595959;">25,000</span>
<span class="t" style="left:80.8px;top:434.5px;font-size:11px;color:#595959;">30,000</span>
<span class="t" style="left:80.8px;top:418.5px;font-size:11px;color:#595959;">35,000</span>
<div class="t" style="left:49.500px;top:473px;width:40px;text-align:center;font-size:11px;font-weight:bold;color:#777;transform:rotate(-90deg)">金額</div>
<span class="t" style="left:226.125px;top:535.5px;font-size:12px;color:#595959;transform:scaleX(0.963);transform-origin:0 50%">4月</span>
<span class="t" style="left:446.375px;top:535.5px;font-size:12px;color:#595959;transform:scaleX(0.963);transform-origin:0 50%">5月</span>
<span class="t" style="left:666.625px;top:535.5px;font-size:12px;color:#595959;transform:scaleX(0.963);transform-origin:0 50%">6月</span>
<span class="t" style="left:886.875px;top:535.5px;font-size:12px;color:#595959;transform:scaleX(0.963);transform-origin:0 50%">7月</span>
<div class="a" style="left:78px;top:557px;width:8px;height:8px;background:linear-gradient(#fb9a33,#e58623);border:1px solid #e58623;border-top:2px solid #ffd24d"></div>
<span class="t" style="left:87px;top:555.25px;font-size:11.5px;color:#595959;transform:scaleX(0.790);transform-origin:0 50%">ソフトA</span>
<span class="t" style="left:218.4px;top:555.5px;font-size:11px;color:#595959;">20,000</span>
<span class="t" style="left:438.7px;top:555.5px;font-size:11px;color:#595959;">22,000</span>
<span class="t" style="left:658.9px;top:555.5px;font-size:11px;color:#595959;">24,000</span>
<span class="t" style="left:879.2px;top:555.5px;font-size:11px;color:#595959;">21,000</span>
<div class="a" style="left:78px;top:578px;width:8px;height:8px;background:linear-gradient(#41b9e3,#2f8db3);border:1px solid #2f8db3;border-top:2px solid #6fe9ff"></div>
<span class="t" style="left:87px;top:575.75px;font-size:11.5px;color:#595959;transform:scaleX(0.790);transform-origin:0 50%">ソフトB</span>
<span class="t" style="left:218.4px;top:576.0px;font-size:11px;color:#595959;">26,000</span>
<span class="t" style="left:438.7px;top:576.0px;font-size:11px;color:#595959;">25,000</span>
<span class="t" style="left:658.9px;top:576.0px;font-size:11px;color:#595959;">27,000</span>
<span class="t" style="left:879.2px;top:576.0px;font-size:11px;color:#595959;">24,000</span>
<div class="a" style="left:78px;top:598px;width:8px;height:8px;background:linear-gradient(#8a5fb6,#6a488f);border:1px solid #6a488f;border-top:2px solid #c59cf5"></div>
<span class="t" style="left:87px;top:596.25px;font-size:11.5px;color:#595959;transform:scaleX(0.779);transform-origin:0 50%">ソフトC</span>
<span class="t" style="left:218.4px;top:596.5px;font-size:11px;color:#595959;">21,000</span>
<span class="t" style="left:438.7px;top:596.5px;font-size:11px;color:#595959;">24,000</span>
<span class="t" style="left:658.9px;top:596.5px;font-size:11px;color:#595959;">25,000</span>
<span class="t" style="left:879.2px;top:596.5px;font-size:11px;color:#595959;">28,000</span>
<div class="a" style="left:78px;top:618px;width:8px;height:8px;background:linear-gradient(#dc600d,#a84a09);border:1px solid #a84a09;border-top:2px solid #ff8e35"></div>
<span class="t" style="left:87px;top:616.25px;font-size:11.5px;color:#595959;transform:scaleX(0.779);transform-origin:0 50%">ソフトD</span>
<span class="t" style="left:218.4px;top:616.5px;font-size:11px;color:#595959;">24,000</span>
<span class="t" style="left:438.7px;top:616.5px;font-size:11px;color:#595959;">25,000</span>
<span class="t" style="left:658.9px;top:616.5px;font-size:11px;color:#595959;">23,000</span>
<span class="t" style="left:879.2px;top:616.5px;font-size:11px;color:#595959;">29,000</span>
<span class="t" style="left:553.8px;top:635.8px;font-size:12px;color:#595959;transform:scaleX(0.979);transform-origin:0 50%">期間</span>
<div class="a" style="left:431px;top:674px;width:8px;height:8px;background:linear-gradient(#fb9a33,#e58623);border:1px solid #e58623;border-top:2px solid #ffd24d"></div>
<span class="t" style="left:440.3px;top:671.75px;font-size:11.5px;color:#595959;transform:scaleX(0.790);transform-origin:0 50%">ソフトA</span>
<div class="a" style="left:486px;top:674px;width:8px;height:8px;background:linear-gradient(#41b9e3,#2f8db3);border:1px solid #2f8db3;border-top:2px solid #6fe9ff"></div>
<span class="t" style="left:495.3px;top:671.75px;font-size:11.5px;color:#595959;transform:scaleX(0.790);transform-origin:0 50%">ソフトB</span>
<div class="a" style="left:540px;top:674px;width:8px;height:8px;background:linear-gradient(#8a5fb6,#6a488f);border:1px solid #6a488f;border-top:2px solid #c59cf5"></div>
<span class="t" style="left:549.3px;top:671.75px;font-size:11.5px;color:#595959;transform:scaleX(0.779);transform-origin:0 50%">ソフトC</span>
<div class="a" style="left:595px;top:674px;width:8px;height:8px;background:linear-gradient(#dc600d,#a84a09);border:1px solid #a84a09;border-top:2px solid #ff8e35"></div>
<span class="t" style="left:604.3px;top:671.75px;font-size:11.5px;color:#595959;transform:scaleX(0.779);transform-origin:0 50%">ソフトD</span>
<div class="a" style="left:1247px;top:191px;width:21px;height:639px;background:#fff"></div>
<div class="a" style="left:1246px;top:209px;width:1px;height:621px;background:#ababab"></div>
<div class="a" style="left:1247px;top:191px;width:21px;height:3px;background:#fff"></div>
<div class="a" style="left:1250px;top:194px;width:15px;height:15px;border:1px solid #ababab;background:#fff"></div>
<div class="a" style="left:1254px;top:199px;width:0;height:0;border-left:3.500px solid transparent;border-right:3.500px solid transparent;border-bottom:4px solid #777"></div>
<div class="a" style="left:1250px;top:209px;width:15px;height:587px;border:1px solid #ababab;background:#fff"></div>
<div class="a" style="left:1250px;top:796px;width:15px;height:19px;background:#f0f0f0"></div>
<div class="a" style="left:1250px;top:815px;width:15px;height:15px;border:1px solid #c6c6c6;background:#fff"></div>
<div class="a" style="left:1254px;top:821px;width:0;height:0;border-left:3.500px solid transparent;border-right:3.500px solid transparent;border-top:4px solid #777"></div>
<div class="a" style="left:1px;top:829px;width:1267px;height:26px;background:#f3f3f3"></div>
<div class="a" style="left:1px;top:829px;width:1246px;height:1px;background:#ababab"></div>
<div class="a" style="left:28px;top:838px;width:0;height:0;border-top:4.500px solid transparent;border-bottom:4.500px solid transparent;border-right:4px solid #c6c6c6"></div>
<div class="a" style="left:57px;top:838px;width:0;height:0;border-top:4.500px solid transparent;border-bottom:4.500px solid transparent;border-left:4px solid #c6c6c6"></div>
<div class="a" style="left:101px;top:829px;width:64px;height:25px;background:#fff;border-left:1px solid #ababab;border-right:1px solid #ababab;border-bottom:2px solid #217346"></div>
<span class="t" style="left:113.2px;top:836.0px;font-size:13px;color:#217346;transform:scaleX(0.979);transform-origin:0 50%">札幌店</span>
<span class="t" style="left:175.9px;top:836.0px;font-size:13px;color:#444;">渋谷店</span>
<div class="a" style="left:227px;top:833px;width:1px;height:19px;background:#ababab"></div>
<span class="t" style="left:239.0px;top:836.0px;font-size:13px;color:#444;">博多店</span>
<div class="a" style="left:289px;top:833px;width:1px;height:19px;background:#ababab"></div>
<svg style="left:322px;top:834px" width="18" height="18" viewBox="0 0 18 18"><circle cx="9" cy="9" r="7.700" fill="none" stroke="#666" stroke-width="1.200"/><path d="M9 5v8M5 9h8" stroke="#666" stroke-width="1.600"/></svg>
<div class="a" style="left:761px;top:839px;width:2px;height:2px;background:#aaa"></div><div class="a" style="left:761px;top:843px;width:2px;height:2px;background:#aaa"></div><div class="a" style="left:761px;top:847px;width:2px;height:2px;background:#aaa"></div>
<div class="a" style="left:778px;top:836px;width:469px;height:15px;background:#e8e8e8"></div>
<div class="a" style="left:778px;top:836px;width:15px;height:15px;border:1px solid #ababab;background:#fff"></div>
<div class="a" style="left:783px;top:840px;width:0;height:0;border-top:3.500px solid transparent;border-bottom:3.500px solid transparent;border-right:4px solid #777"></div>
<div class="a" style="left:793px;top:836px;width:411px;height:15px;border:1px solid #ababab;background:#fff"></div>
<div class="a" style="left:1232px;top:836px;width:15px;height:15px;border:1px solid #ababab;background:#fff"></div>
<div class="a" style="left:1238px;top:840px;width:0;height:0;border-top:3.500px solid transparent;border-bottom:3.500px solid transparent;border-left:4px solid #777"></div>
<div class="a" style="left:0;top:857px;width:1269px;height:23px;background:#217346"></div>
<span class="t" style="left:8.0px;top:863.0px;font-size:12px;color:#fff;">準備完了</span>
<div class="a" style="left:960px;top:857px;width:37px;height:23px;background:#185c37"></div>
<svg style="left:970px;top:861px" width="14" height="13" viewBox="0 0 14 13" shape-rendering="crispEdges"><path d="M.5.500h13v12H.5zM.5 4.500h13M.5 8.500h13M4.500 .5v12M9.500 .5v12" fill="none" stroke="#fff"/></svg>
<svg style="left:1009px;top:861px" width="14" height="13" viewBox="0 0 14 13" shape-rendering="crispEdges"><path d="M.5.500h13v12H.5z" fill="none" stroke="#fff"/><path d="M3.500 3.500h7v6h-7zM3.500 5.500h7M3.500 7.500h7" fill="none" stroke="#fff"/></svg>
<svg style="left:1047px;top:861px" width="14" height="13" viewBox="0 0 14 13" shape-rendering="crispEdges"><path d="M.5.500h13v12H.5z" fill="none" stroke="#fff"/><path d="M1 1h4v6H1zM8 1h5v4H8z" fill="#fff"/></svg>
<div class="a" style="left:1078px;top:867px;width:6px;height:2px;background:#fff"></div>
<div class="a" style="left:1088px;top:867px;width:100px;height:1px;background:#fff"></div>
<div class="a" style="left:1136px;top:861px;width:4px;height:12px;background:#fff"></div>
<div class="a" style="left:1192px;top:867px;width:9px;height:2px;background:#fff"></div><div class="a" style="left:1195.500px;top:863px;width:2px;height:10px;background:#fff"></div>
<span class="t" style="left:1215.4px;top:863.0px;font-size:12px;color:#fff;transform:scaleX(1.062);transform-origin:0 50%">100%</span>
</body></html>
